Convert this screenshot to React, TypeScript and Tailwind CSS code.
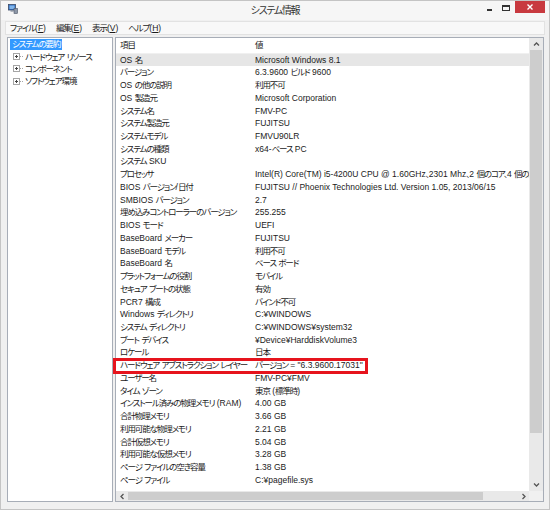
import React from "react";

const rows: [string, string][] = [
  ["OS 名", "Microsoft Windows 8.1"],
  ["バージョン", "6.3.9600 ビルド 9600"],
  ["OS の他の説明", "利用不可"],
  ["OS 製造元", "Microsoft Corporation"],
  ["システム名", "FMV-PC"],
  ["システム製造元", "FUJITSU"],
  ["システムモデル", "FMVU90LR"],
  ["システムの種類", "x64-ベース PC"],
  ["システム SKU", ""],
  ["プロセッサ", "Intel(R) Core(TM) i5-4200U CPU @ 1.60GHz、2301 Mhz、2 個のコア、4 個の論理プロセッサ"],
  ["BIOS バージョン/日付", "FUJITSU // Phoenix Technologies Ltd. Version 1.05, 2013/06/15"],
  ["SMBIOS バージョン", "2.7"],
  ["埋め込みコントローラーのバージョン", "255.255"],
  ["BIOS モード", "UEFI"],
  ["BaseBoard メーカー", "FUJITSU"],
  ["BaseBoard モデル", "利用不可"],
  ["BaseBoard 名", "ベース ボード"],
  ["プラットフォームの役割", "モバイル"],
  ["セキュア ブートの状態", "有効"],
  ["PCR7 構成", "バインド不可"],
  ["Windows ディレクトリ", "C:¥WINDOWS"],
  ["システム ディレクトリ", "C:¥WINDOWS¥system32"],
  ["ブート デバイス", "¥Device¥HarddiskVolume3"],
  ["ロケール", "日本"],
  ["ハードウェア アブストラクション レイヤー", "バージョン = \"6.3.9600.17031\""],
  ["ユーザー名", "FMV-PC¥FMV"],
  ["タイム ゾーン", "東京 (標準時)"],
  ["インストール済みの物理メモリ (RAM)", "4.00 GB"],
  ["合計物理メモリ", "3.66 GB"],
  ["利用可能な物理メモリ", "2.21 GB"],
  ["合計仮想メモリ", "5.04 GB"],
  ["利用可能な仮想メモリ", "3.28 GB"],
  ["ページ ファイルの空き容量", "1.38 GB"],
  ["ページ ファイル", "C:¥pagefile.sys"],
];

const treeItems = ["ハードウェア リソース", "コンポーネント", "ソフトウェア環境"];

// 和文の字幅を Meiryo UI に近づけるため、和文部分だけ字詰めする
function Jp({ text }: { text: string }) {
  const parts = text.split(/([\u3000-\u30ff\u3400-\u9fff\uff00-\uffef]+)/);
  return (
    <>
      {parts.map((part, i) =>
        i % 2 === 1 ? (
          <span key={i} className="tracking-[-0.13em]">
            {part}
          </span>
        ) : (
          part
        )
      )}
    </>
  );
}

function AppIcon() {
  return (
    <svg width="10" height="10" viewBox="0 0 10 10">
      <rect x="0.5" y="0.5" width="7" height="5.5" fill="#2f6fc4" stroke="#3a4a66" strokeWidth="0.8" />
      <rect x="1.5" y="1.5" width="5" height="3.5" fill="#7fb4ea" />
      <rect x="2.5" y="6.5" width="3" height="1" fill="#6b7688" />
      <rect x="6" y="4.5" width="3.5" height="5" fill="#8e98a8" stroke="#4c5566" strokeWidth="0.6" />
    </svg>
  );
}

function ExpandBox() {
  return (
    <svg width="11" height="12" viewBox="0 0 11 12" className="shrink-0">
      <rect x="0.5" y="2.5" width="6" height="6" fill="#fff" stroke="#a6a6a6" />
      <line x1="2" y1="5.5" x2="5" y2="5.5" stroke="#444" />
      <line x1="3.5" y1="4" x2="3.5" y2="7" stroke="#444" />
      <line x1="7" y1="5.5" x2="11" y2="5.5" stroke="#a6a6a6" strokeDasharray="1 1" />
    </svg>
  );
}

function Chevron({ dir }: { dir: "up" | "down" | "left" | "right" }) {
  const d = {
    up: "M1 4.5 L3.5 2 L6 4.5",
    down: "M1 2.5 L3.5 5 L6 2.5",
    left: "M4.5 1 L2 3.5 L4.5 6",
    right: "M2.5 1 L5 3.5 L2.5 6",
  }[dir];
  return (
    <svg width="7" height="7" viewBox="0 0 7 7">
      <path d={d} fill="none" stroke="#555" strokeWidth="1.3" />
    </svg>
  );
}

export default function App() {
  return (
    <div
      className='w-[550px] h-[510px] bg-[#f0f0f0] border border-[#c4c4c4] flex flex-col overflow-hidden font-["Liberation_Sans","Noto_Sans_CJK_JP",sans-serif] text-[8.5px] text-[#1b1b1b] [font-feature-settings:"palt"_1]'
    >
      {/* タイトルバー */}
      <div className="h-[19px] grid grid-cols-[1fr_auto_1fr] bg-[#f6f6f6]">
        <div className="pl-[7px] pt-[3px]">
          <AppIcon />
        </div>
        <div className="text-[10px] leading-[19px] text-[#333]">
          <Jp text="システム情報" />
        </div>
        <div className="flex justify-end items-start pr-[4px]">
          <div className="w-[16px] h-[12px] flex justify-center">
            <div className="mt-[8px] w-[5px] h-[1.5px] bg-[#333]" />
          </div>
          <div className="w-[18px] h-[12px] flex justify-center">
            <div className="mt-[4px] w-[8px] h-[6px] border border-t-2 border-[#333]" />
          </div>
          <div className="w-[30px] h-[12px] bg-[#c8393f] flex items-center justify-center">
            <svg width="6" height="6" viewBox="0 0 6 6">
              <path d="M0.5 0.5 L5.5 5.5 M5.5 0.5 L0.5 5.5" stroke="#fff" strokeWidth="1.4" />
            </svg>
          </div>
        </div>
      </div>

      {/* メニューバー */}
      <div className="mx-[4px] mt-[1px] h-[14px] border border-[#e2e2e2] bg-[#f8f8f8] flex items-center gap-[10px] pl-[4px]">
        <span>
          <Jp text="ファイル" />(<span className="underline">F</span>)
        </span>
        <span>
          <Jp text="編集" />(<span className="underline">E</span>)
        </span>
        <span>
          <Jp text="表示" />(<span className="underline">V</span>)
        </span>
        <span>
          <Jp text="ヘルプ" />(<span className="underline">H</span>)
        </span>
      </div>

      {/* 本体 */}
      <div className="mt-[2px] h-[465px] flex gap-[2px] pl-[6px] pr-[5px]">
        <div className="w-[106px] shrink-0 overflow-hidden border border-[#a7adb7] bg-white pt-[1px] flex flex-col">
          <div className="h-[11px] flex items-center pl-[2px]">
            <span className="bg-[#3399ff] text-white px-[2px] h-[11px] leading-[11px]">
              <Jp text="システムの要約" />
            </span>
          </div>
          {treeItems.map((item, i) => (
            <div key={item} className={`h-[12.3px] flex items-center pl-[5px] ${i === 0 ? "mt-[1px]" : ""}`}>
              <ExpandBox />
              <span className="ml-[1px] whitespace-nowrap">
                <Jp text={item} />
              </span>
            </div>
          ))}
        </div>

        <div className="relative flex-1 min-w-0 border border-[#a7adb7] bg-white flex flex-col">
          <div className="flex-1 flex min-h-0">
            <div className="flex-1 min-w-0 overflow-hidden">
              <div className="h-[15.6px] flex items-center border-b border-[#f0f0f0]">
                <div className="w-[139px] shrink-0 pl-[4px]">
                  <Jp text="項目" />
                </div>
                <div>
                  <Jp text="値" />
                </div>
              </div>
              {rows.map(([label, value], i) => (
                <div
                  key={label}
                  className={`h-[12.74px] flex items-center whitespace-nowrap ${i === 0 ? "bg-[#e6e6e6]" : ""}`}
                >
                  <div className="w-[139px] shrink-0 pl-[4px] overflow-hidden">
                    <Jp text={label} />
                  </div>
                  <div>
                    <Jp text={value} />
                  </div>
                </div>
              ))}
            </div>
            <div className="w-[14px] shrink-0 bg-[#e9e9e9] flex flex-col items-center">
              <div className="h-[12px] flex items-center justify-center">
                <Chevron dir="up" />
              </div>
              <div className="w-[12px] h-[383px] bg-[#cdcdcd]" />
              <div className="flex-1" />
              <div className="h-[13px] flex items-center justify-center">
                <Chevron dir="down" />
              </div>
            </div>
          </div>
          <div className="h-[10px] flex">
            <div className="flex-1 bg-[#e9e9e9] flex items-center">
              <div className="w-[12px] flex justify-center">
                <Chevron dir="left" />
              </div>
              <div className="w-[355px] h-[8px] bg-[#cdcdcd]" />
              <div className="flex-1" />
              <div className="w-[12px] flex justify-center">
                <Chevron dir="right" />
              </div>
            </div>
            <div className="w-[14px] bg-[#f0f0f0]" />
          </div>

          {/* 強調枠 */}
          <div className="absolute top-[320px] left-[-3px] w-[255px] h-[16px] border-[3px] border-[#e6141d] pointer-events-none" />
        </div>
      </div>
    </div>
  );
}
